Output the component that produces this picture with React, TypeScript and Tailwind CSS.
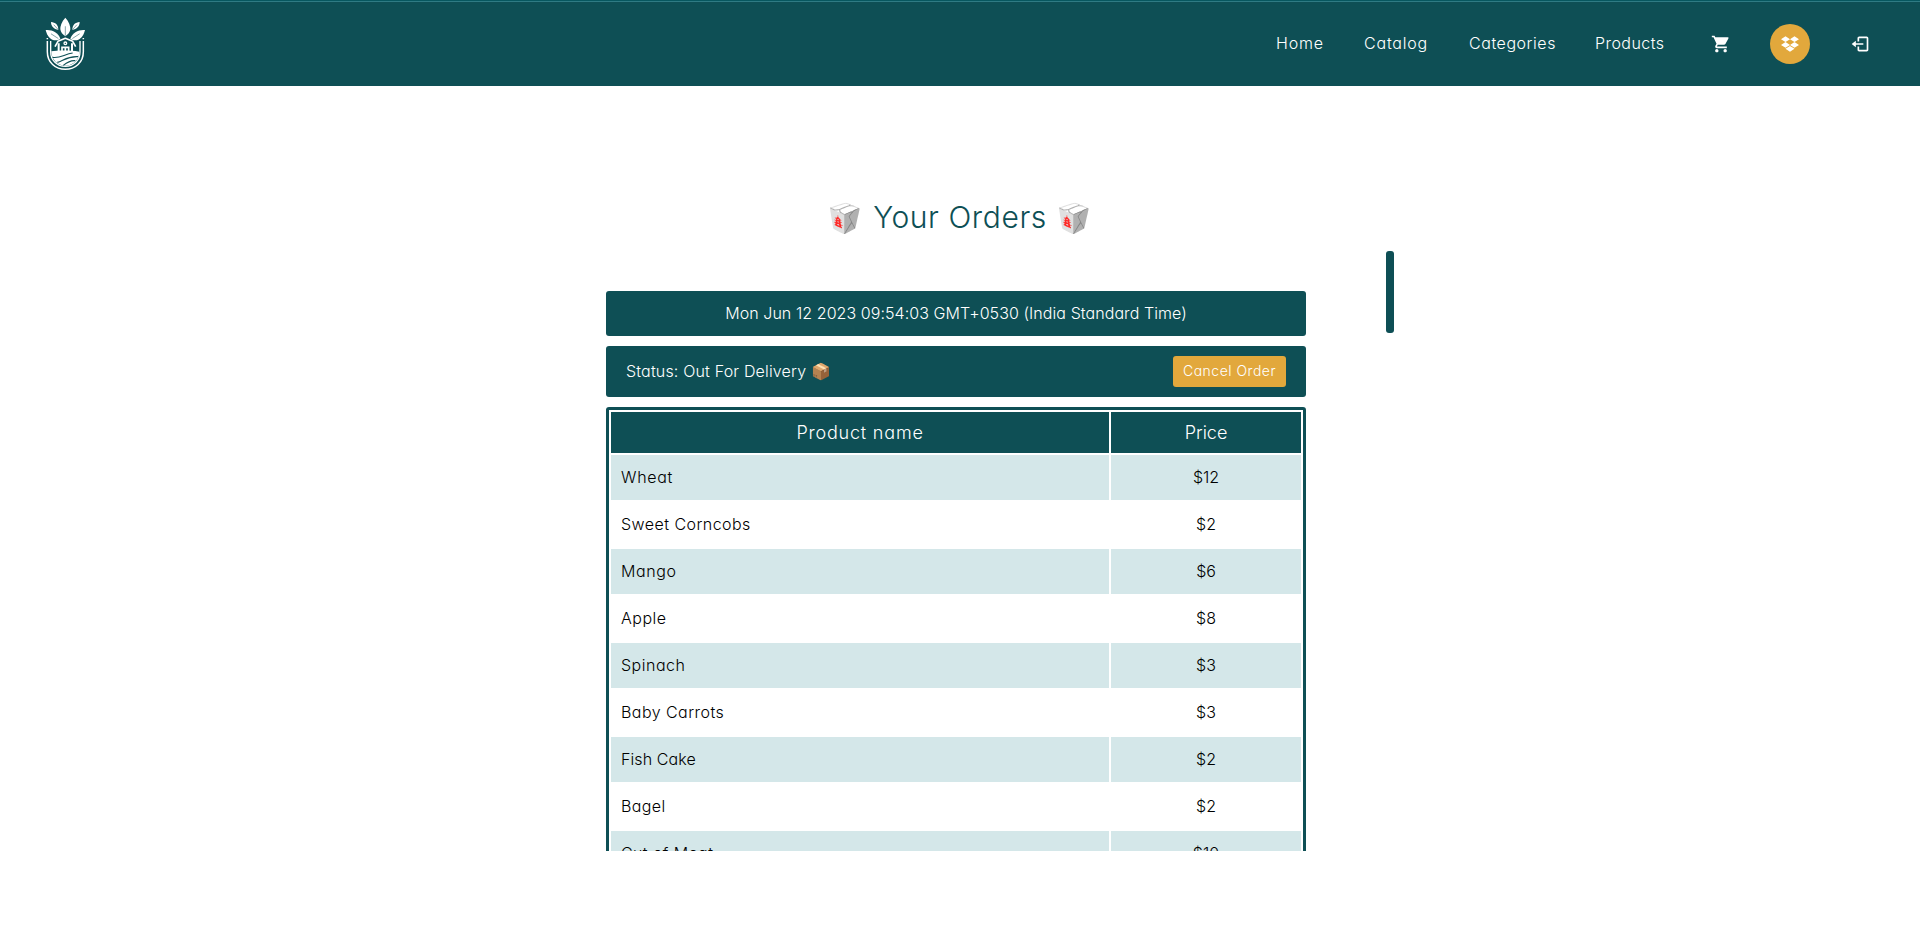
import React from "react";
import { MdShoppingCart } from "react-icons/md";
import { FaDropbox } from "react-icons/fa";
import { BiLogOut } from "react-icons/bi";

type Row = { name: string; price: string; spacing: string };

const rows: Row[] = [
  { name: "Wheat", price: "$12", spacing: "tracking-[0.7px]" },
  { name: "Sweet Corncobs", price: "$2", spacing: "tracking-[0.45px]" },
  { name: "Mango", price: "$6", spacing: "tracking-[0.6px]" },
  { name: "Apple", price: "$8", spacing: "tracking-[0.5px]" },
  { name: "Spinach", price: "$3", spacing: "tracking-[0.5px]" },
  { name: "Baby Carrots", price: "$3", spacing: "tracking-[0.45px]" },
  { name: "Fish Cake", price: "$2", spacing: "tracking-[0.1px]" },
  { name: "Bagel", price: "$2", spacing: "tracking-[0.4px]" },
  { name: "Cut of Meat", price: "$10", spacing: "tracking-[0.4px]" },
];

function Logo() {
  return (
    <svg width="52" height="62" viewBox="0 0 156 186" fill="none" aria-label="Farm logo">
      <g fill="#fff">
        <path d="M76 17C87 29 92 43 91 52C90 61 84 68 76 73C68 68 62 61 61 52C60 43 65 29 76 17Z" />
        <path d="M33 30C46 31 55 38 55 53C42 52 33 43 33 30Z" />
        <path d="M119 30C106 31 97 38 97 53C110 52 119 43 119 30Z" />
        <path d="M17 54C35 52 55 61 61 80C55 85 45 86 37 83C26 78 20 66 17 54Z" />
        <path d="M135 54C117 52 97 61 91 80C97 85 107 86 115 83C126 78 132 66 135 54Z" />
      </g>
      <g stroke="#0e4f55" strokeWidth="1.5" strokeLinecap="round">
        <path d="M76 44V70M42 39L52 50M110 39L100 50M34 66L54 79M118 66L98 79" />
      </g>
      <path
        d="M22 78V82M22 87V119C22 151 46 172 76 172C106 172 130 151 130 119V87M130 78V82"
        stroke="#fff"
        strokeWidth="4.5"
      />
      <path
        d="M32 87V119C32 145 51 163 76 163C101 163 120 145 120 119V87"
        stroke="#fff"
        strokeWidth="4"
      />
      <path d="M34 118C54 115 90 115 118 119C118 143 100 160 76 161C52 160 35 143 34 119Z" fill="#fff" />
      <path
        d="M38 136C60 140 74 126 98 123M52 151C68 148 80 132 114 134M70 160C80 152 92 144 106 146"
        stroke="#0e4f55"
        strokeWidth="3.5"
      />
      <path d="M45 104L54 88L76 79L98 88L107 104" stroke="#fff" strokeWidth="5" strokeLinejoin="round" />
      <path d="M56 94V117M96 94V117" stroke="#fff" strokeWidth="6" />
      <circle cx="76" cy="94" r="4" stroke="#fff" strokeWidth="4" />
      <path d="M66 118V106H86V118M76 106V118" stroke="#fff" strokeWidth="5" />
    </svg>
  );
}

export default function App() {
  return (
    <div className="flex h-[950px] flex-col overflow-hidden bg-white font-['Inter','Noto_Color_Emoji',sans-serif] text-base font-light text-black [font-feature-settings:'cv11']">
      <div className="h-px bg-[#07575f]" />
      <header className="flex h-[85px] items-center border-t border-[#2f7b84] bg-[#0e4f55] pr-10 pl-10 text-white">
        <div className="flex-1 pb-[2px]">
          <Logo />
        </div>
        <nav className="flex gap-10 pb-[2px] whitespace-nowrap">
          <a className="w-12 tracking-[0.8px]">Home</a>
          <a className="w-[65px] tracking-[0.8px]">Catalog</a>
          <a className="w-[86px] tracking-[0.55px]">Categories</a>
          <a className="w-[71px] tracking-[0.45px]">Products</a>
        </nav>
        <div className="ml-[34px] flex gap-[30px]">
          <button className="flex size-10 items-center justify-center pl-px">
            <MdShoppingCart size={20} />
          </button>
          <button className="flex size-10 items-center justify-center rounded-full bg-[#e2a83c]">
            <FaDropbox size={18} />
          </button>
          <button className="flex size-10 items-center justify-center">
            <BiLogOut size={20} />
          </button>
        </div>
      </header>

      <main className="flex flex-col items-center pt-[109px]">
        <h1 className="flex h-[45px] items-center gap-[10px] text-[30px] leading-[45px] text-[#0e4f55]">
          <span className="text-[28.5px]">🥡</span>
          <span className="tracking-[0.6px]">Your Orders</span>
          <span className="text-[28.5px]">🥡</span>
        </h1>

        <div className="mt-[11px] flex h-[600px] w-[868px] overflow-hidden">
          <div className="flex-1 px-20 pt-10">
            <section className="flex w-[700px] flex-col gap-[10px]">
              <div className="flex h-[45px] items-center justify-center rounded-[3px] bg-[#0e4f55] pb-[2px] tracking-[0.07px] text-white">
                Mon Jun 12 2023 09:54:03 GMT+0530 (India Standard Time)
              </div>
              <div className="flex h-[51px] items-center justify-between rounded-[3px] bg-[#0e4f55] px-5 text-white">
                <span className="pb-px tracking-[0.17px]">Status: Out For Delivery 📦</span>
                <button className="h-[31px] w-[113px] rounded-[3px] bg-[#e2a83c] pb-px text-sm tracking-[0.5px] whitespace-nowrap">
                  Cancel Order
                </button>
              </div>
              <table className="w-full table-fixed border-separate border-spacing-[2px] rounded-[3px] border-[3px] border-[#0e4f55]">
                <colgroup>
                  <col className="w-[498px]" />
                  <col className="w-[190px]" />
                </colgroup>
                <thead>
                  <tr className="h-[41px] bg-[#0e4f55] text-lg text-white">
                    <th className="p-0 font-light tracking-[0.8px]">Product name</th>
                    <th className="p-0 font-light">Price</th>
                  </tr>
                </thead>
                <tbody>
                  {rows.map((row) => (
                    <tr key={row.name} className="h-[45px] odd:bg-[#d4e7e9]">
                      <td className={"px-[10px] pt-0 pb-[2px] " + row.spacing}>{row.name}</td>
                      <td className="p-0 pb-[2px] text-center">{row.price}</td>
                    </tr>
                  ))}
                </tbody>
              </table>
            </section>
          </div>
          <div className="h-[82px] w-2 rounded-[3px] bg-[#0e4f55]" />
        </div>
      </main>
    </div>
  );
}
